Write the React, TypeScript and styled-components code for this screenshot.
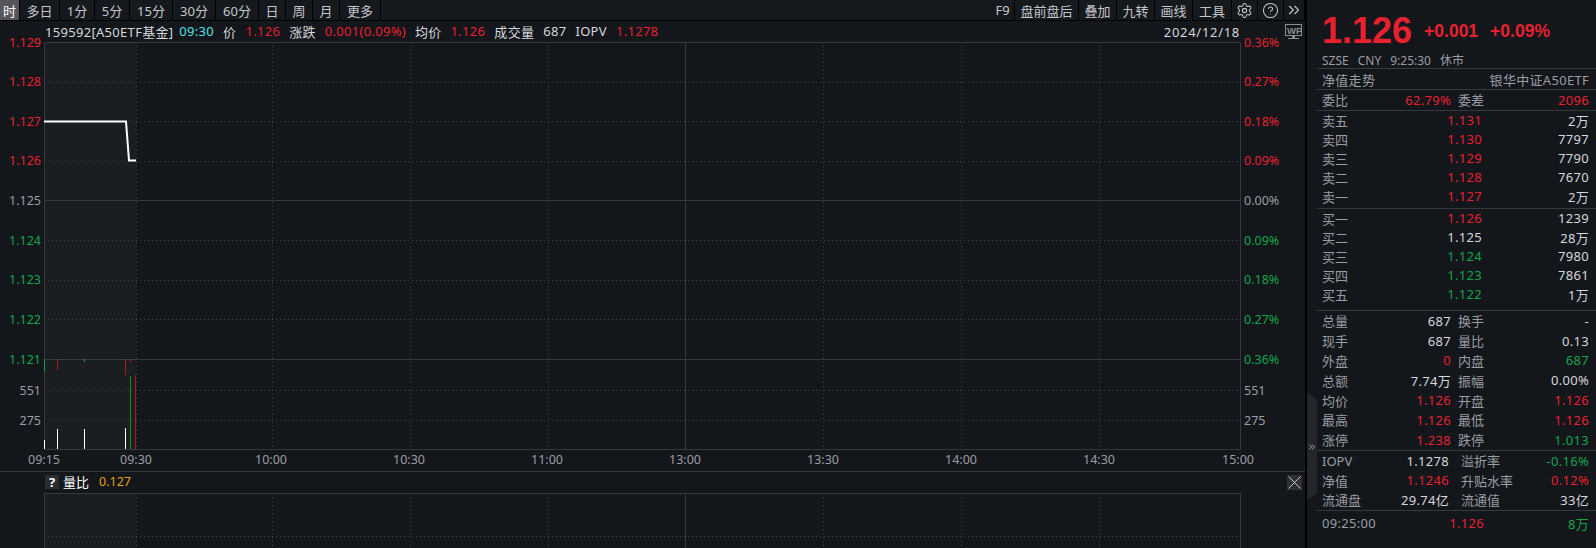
import React from "react"
import styled, { createGlobalStyle } from "styled-components"
import { Settings, CircleHelp, ChevronsRight } from "lucide-react"

const RED = "#e8212f"
const GREEN = "#12a64a"
const GRAY = "#9a9da3"
const TEXT = "#d5d8dc"
const BG = "#13161b"
const LINE = "#37393d"
const DOT = "#43464a"

type Tone = "red" | "green" | "white" | "gray"

const toneColor = (tone?: Tone): string => {
    if (tone === "red") return RED
    if (tone === "green") return GREEN
    if (tone === "gray") return GRAY
    return TEXT
}

const GlobalStyle = createGlobalStyle`
    html, body {
        margin: 0;
        padding: 0;
        background: ${BG};
    }
    body {
        font-family: "Noto Sans", "Noto Sans CJK SC", sans-serif;
        font-size: 13px;
        color: ${TEXT};
    }
`

const periods = [
    { label: "时", width: 20, active: true },
    { label: "多日", width: 40 },
    { label: "1分", width: 35 },
    { label: "5分", width: 35 },
    { label: "15分", width: 43 },
    { label: "30分", width: 43 },
    { label: "60分", width: 43 },
    { label: "日", width: 27 },
    { label: "周", width: 27 },
    { label: "月", width: 27 },
    { label: "更多", width: 41 },
]

const tools = [
    { label: "F9", width: 24 },
    { label: "盘前盘后", width: 64 },
    { label: "叠加", width: 38 },
    { label: "九转", width: 38 },
    { label: "画线", width: 38 },
    { label: "工具", width: 39 },
]

const leftMain: { text: string; tone: Tone }[] = [
    { text: "1.129", tone: "red" },
    { text: "1.128", tone: "red" },
    { text: "1.127", tone: "red" },
    { text: "1.126", tone: "red" },
    { text: "1.125", tone: "gray" },
    { text: "1.124", tone: "green" },
    { text: "1.123", tone: "green" },
    { text: "1.122", tone: "green" },
    { text: "1.121", tone: "green" },
]

const rightMain: { text: string; tone: Tone }[] = [
    { text: "0.36%", tone: "red" },
    { text: "0.27%", tone: "red" },
    { text: "0.18%", tone: "red" },
    { text: "0.09%", tone: "red" },
    { text: "0.00%", tone: "gray" },
    { text: "0.09%", tone: "green" },
    { text: "0.18%", tone: "green" },
    { text: "0.27%", tone: "green" },
    { text: "0.36%", tone: "green" },
]

const times = [
    { label: "09:15", gap: 44 },
    { label: "09:30", gap: 92 },
    { label: "10:00", gap: 135 },
    { label: "10:30", gap: 138 },
    { label: "11:00", gap: 138 },
    { label: "13:00", gap: 138 },
    { label: "13:30", gap: 138 },
    { label: "14:00", gap: 138 },
    { label: "14:30", gap: 138 },
    { label: "15:00", gap: 139 },
]

const gridX = [92, 228, 366, 504, 779, 917, 1055]
const gridY = [39.5, 79, 118.5, 198, 237.5, 277]

const asks: [string, string, Tone, string][] = [
    ["卖五", "1.131", "red", "2万"],
    ["卖四", "1.130", "red", "7797"],
    ["卖三", "1.129", "red", "7790"],
    ["卖二", "1.128", "red", "7670"],
    ["卖一", "1.127", "red", "2万"],
]

const bids: [string, string, Tone, string][] = [
    ["买一", "1.126", "red", "1239"],
    ["买二", "1.125", "white", "28万"],
    ["买三", "1.124", "green", "7980"],
    ["买四", "1.123", "green", "7861"],
    ["买五", "1.122", "green", "1万"],
]

const stats: [string, string, Tone, string, string, Tone][] = [
    ["总量", "687", "white", "换手", "-", "white"],
    ["现手", "687", "white", "量比", "0.13", "white"],
    ["外盘", "0", "red", "内盘", "687", "green"],
    ["总额", "7.74万", "white", "振幅", "0.00%", "white"],
    ["均价", "1.126", "red", "开盘", "1.126", "red"],
    ["最高", "1.126", "red", "最低", "1.126", "red"],
    ["涨停", "1.238", "red", "跌停", "1.013", "green"],
]

const fund: [string, string, Tone, string, string, Tone][] = [
    ["IOPV", "1.1278", "white", "溢折率", "-0.16%", "green"],
    ["净值", "1.1246", "red", "升贴水率", "0.12%", "red"],
    ["流通盘", "29.74亿", "white", "流通值", "33亿", "white"],
]

const MainPlot = () => (
    <svg width="1197" height="408" viewBox="0 0 1197 408" shapeRendering="crispEdges" style={{ display: "block" }}>
        <rect x="0" y="0" width="92" height="408" fill="#1b1e21" />
        {gridY.map(y => (
            <line key={y} x1="0" x2="1197" y1={y + 0.5} y2={y + 0.5} stroke={DOT} strokeDasharray="1 3" />
        ))}
        {[348, 378].map(y => (
            <line key={y} x1="0" x2="1197" y1={y + 0.5} y2={y + 0.5} stroke={DOT} strokeDasharray="1 3" />
        ))}
        {gridX.map(x => (
            <line key={x} x1={x + 0.5} x2={x + 0.5} y1="0" y2="407" stroke={DOT} strokeDasharray="1 3" />
        ))}
        <line x1="0" x2="1197" y1="158.5" y2="158.5" stroke={LINE} />
        <line x1="641.5" x2="641.5" y1="0" y2="407" stroke={LINE} />
        <rect x="0.5" y="0.5" width="1196" height="406.5" fill="none" stroke={LINE} />
        <line x1="0" x2="1197" y1="317.5" y2="317.5" stroke={LINE} />
        <polyline points="0,79.5 82,79.5 85,118.5 92,118.5" fill="none" stroke="#ffffff" strokeWidth="2" shapeRendering="auto" />
        <line x1="0.5" x2="0.5" y1="317" y2="329" stroke={GREEN} />
        <line x1="13.5" x2="13.5" y1="317" y2="328" stroke="#b5141c" />
        <line x1="40.5" x2="40.5" y1="317" y2="320" stroke={GREEN} />
        <line x1="81.5" x2="81.5" y1="317" y2="333" stroke="#b5141c" />
        <line x1="86.5" x2="86.5" y1="317" y2="320" stroke="#b5141c" />
        <line x1="0.5" x2="0.5" y1="398" y2="407" stroke="#ffffff" />
        <line x1="13.5" x2="13.5" y1="387" y2="407" stroke="#ffffff" />
        <line x1="40.5" x2="40.5" y1="387" y2="407" stroke="#ffffff" />
        <line x1="81.5" x2="81.5" y1="386" y2="407" stroke="#ffffff" />
        <line x1="86.5" x2="86.5" y1="334" y2="407" stroke="#0c8f1f" />
        <line x1="91.5" x2="91.5" y1="333" y2="407" stroke="#b5141c" />
    </svg>
)

const LowerPlot = () => (
    <svg width="1197" height="55" viewBox="0 0 1197 55" shapeRendering="crispEdges" style={{ display: "block" }}>
        <rect x="0" y="0" width="92" height="55" fill="#1b1e21" />
        <line x1="0" x2="1197" y1="43.5" y2="43.5" stroke={DOT} strokeDasharray="1 3" />
        {gridX.map(x => (
            <line key={x} x1={x + 0.5} x2={x + 0.5} y1="0" y2="55" stroke={DOT} strokeDasharray="1 3" />
        ))}
        <line x1="641.5" x2="641.5" y1="0" y2="55" stroke={LINE} />
        <line x1="0" x2="1197" y1="0.5" y2="0.5" stroke={LINE} />
        <line x1="0.5" x2="0.5" y1="0" y2="55" stroke={LINE} />
        <line x1="1196.5" x2="1196.5" y1="0" y2="55" stroke={LINE} />
    </svg>
)

const WpIcon = () => (
    <svg width="17" height="16" viewBox="0 0 17 16">
        <rect x="0.5" y="0.5" width="16" height="11" fill="none" stroke="#8a8d90" />
        <text x="2" y="9.5" fontSize="9.5" fontWeight="700" fontFamily="Liberation Sans, sans-serif" fill="#8a8d90">WP</text>
        <rect x="7" y="12" width="3" height="2" fill="#8a8d90" />
        <rect x="3" y="14" width="11" height="1" fill="#8a8d90" />
    </svg>
)

const CloseIcon = () => (
    <svg width="15" height="15" viewBox="0 0 15 15">
        <path d="M1.5 1.5 L13.5 13.5 M13.5 1.5 L1.5 13.5" stroke="#c8c8c8" strokeWidth="1" fill="none" />
    </svg>
)

const App: React.FC = () => (
    <Page>
        <GlobalStyle />
        <LeftPane>
            <Toolbar>
                <ToolGroup>
                    {periods.map(p => (
                        <ToolButton key={p.label} $width={p.width} $active={p.active}>{p.label}</ToolButton>
                    ))}
                </ToolGroup>
                <ToolGroup>
                    {tools.map(t => (
                        <ToolButton key={t.label} $width={t.width}>{t.label}</ToolButton>
                    ))}
                    <ToolButton $width={26}><Settings size={17} strokeWidth={1.5} /></ToolButton>
                    <ToolButton $width={26}><CircleHelp size={17} strokeWidth={1.5} /></ToolButton>
                    <ToolButton $width={21}><ChevronsRight size={18} strokeWidth={1.5} /></ToolButton>
                </ToolGroup>
            </Toolbar>
            <InfoBar>
                <InfoItems>
                    <InfoName>159592[A50ETF基金]</InfoName>
                    <InfoValue $color="#4fe3e3">09:30</InfoValue>
                    <span>价</span>
                    <InfoValue $color={RED}>1.126</InfoValue>
                    <span>涨跌</span>
                    <InfoValue $color={RED}>0.001(0.09%)</InfoValue>
                    <span>均价</span>
                    <InfoValue $color={RED}>1.126</InfoValue>
                    <span>成交量</span>
                    <span>687</span>
                    <span>IOPV</span>
                    <InfoValue $color={RED}>1.1278</InfoValue>
                </InfoItems>
                <DateLabel>2024/12/18</DateLabel>
                <WpSlot><WpIcon /></WpSlot>
            </InfoBar>
            <ChartRow>
                <LeftAxis>
                    <MainTicks>
                        {leftMain.map(t => <Tick key={t.text} $tone={t.tone}>{t.text}</Tick>)}
                    </MainTicks>
                    <VolTicks>
                        <Tick $tone="gray">551</Tick>
                        <Tick $tone="gray">275</Tick>
                    </VolTicks>
                </LeftAxis>
                <MainPlot />
                <RightAxis>
                    <MainTicks>
                        {rightMain.map((t, i) => <Tick key={i} $tone={t.tone}>{t.text}</Tick>)}
                    </MainTicks>
                    <VolTicks>
                        <Tick $tone="gray">551</Tick>
                        <Tick $tone="gray">275</Tick>
                    </VolTicks>
                </RightAxis>
            </ChartRow>
            <TimeAxis>
                {times.map(t => <TimeTick key={t.label} $gap={t.gap}>{t.label}</TimeTick>)}
            </TimeAxis>
            <LegendBar>
                <LegendItems>
                    <HelpBox>?</HelpBox>
                    <LegendName>量比</LegendName>
                    <LegendValue>0.127</LegendValue>
                </LegendItems>
                <CloseBox><CloseIcon /></CloseBox>
            </LegendBar>
            <LowerRow><LowerPlot /></LowerRow>
        </LeftPane>
        <Divider>
            <Handle><ChevronsRight size={12} strokeWidth={2} /></Handle>
        </Divider>
        <SidePanel>
            <Quote>
                <BigPrice>1.126</BigPrice>
                <QuoteChange>+0.001</QuoteChange>
                <QuoteChange>+0.09%</QuoteChange>
            </Quote>
            <MetaRow>
                <span>SZSE</span>
                <span>CNY</span>
                <span>9:25:30</span>
                <span>休市</span>
            </MetaRow>
            <Section>
                <TitleRow>
                    <span>净值走势</span>
                    <span>银华中证A50ETF</span>
                </TitleRow>
            </Section>
            <Section>
                <StatRow>
                    <Label>委比</Label>
                    <Value $tone="red">62.79%</Value>
                    <Label>委差</Label>
                    <Value $tone="red">2096</Value>
                </StatRow>
            </Section>
            <BookSection $bottom={2}>
                {asks.map(([name, price, tone, vol]) => (
                    <BookRow key={name}>
                        <Label>{name}</Label>
                        <Value $tone={tone}>{price}</Value>
                        <Value>{vol}</Value>
                    </BookRow>
                ))}
            </BookSection>
            <BookSection $bottom={6}>
                {bids.map(([name, price, tone, vol]) => (
                    <BookRow key={name}>
                        <Label>{name}</Label>
                        <Value $tone={tone}>{price}</Value>
                        <Value>{vol}</Value>
                    </BookRow>
                ))}
            </BookSection>
            <StatSection>
                {stats.map(([a, av, at, b, bv, bt]) => (
                    <StatRow key={a}>
                        <Label>{a}</Label>
                        <Value $tone={at}>{av}</Value>
                        <Label>{b}</Label>
                        <Value $tone={bt}>{bv}</Value>
                    </StatRow>
                ))}
            </StatSection>
            <StatSection>
                {fund.map(([a, av, at, b, bv, bt]) => (
                    <FundRow key={a}>
                        <Label>{a}</Label>
                        <Value $tone={at}>{av}</Value>
                        <Label>{b}</Label>
                        <Value $tone={bt}>{bv}</Value>
                    </FundRow>
                ))}
            </StatSection>
            <TickRow>
                <Value $tone="gray">09:25:00</Value>
                <Value $tone="red">1.126</Value>
                <Value $tone="green">8万</Value>
            </TickRow>
        </SidePanel>
    </Page>
)

const Page = styled.div`
    display: flex;
    width: 1596px;
    height: 548px;
    overflow: hidden;
    background: ${BG};
`
const LeftPane = styled.div`
    width: 1305px;
    flex: none;
    display: flex;
    flex-direction: column;
`
const Toolbar = styled.div`
    height: 20px;
    display: flex;
    justify-content: space-between;
    border-bottom: 1px solid #000;
    background: #15181d;
`
const ToolGroup = styled.div`
    display: flex;
`
const ToolButton = styled.div<{ $width: number; $active?: boolean }>`
    width: ${p => p.$width}px;
    display: flex;
    align-items: center;
    justify-content: center;
    box-sizing: border-box;
    border-right: 1px solid #000;
    color: ${p => (p.$active ? "#ffffff" : "#c4c7cb")};
    background: ${p => (p.$active ? "#55565c" : "transparent")};
    white-space: nowrap;
`
const InfoBar = styled.div`
    height: 21px;
    display: flex;
    align-items: center;
    padding-left: 45px;
`
const InfoItems = styled.div`
    flex: 1;
    display: flex;
    gap: 9px;
    white-space: nowrap;
    letter-spacing: 0.3px;
`
const InfoName = styled.span`
    margin-right: -3px;
`
const InfoValue = styled.span<{ $color: string }>`
    color: ${p => p.$color};
`
const DateLabel = styled.div`
    margin-right: 3px;
    letter-spacing: 0.7px;
`
const WpSlot = styled.div`
    width: 62px;
    display: flex;
    justify-content: flex-end;
    padding-right: 3px;
    box-sizing: border-box;
`
const ChartRow = styled.div`
    display: flex;
    height: 408px;
    font-size: 12.5px;
`
const LeftAxis = styled.div`
    width: 44px;
    flex: none;
    --tick-justify: flex-end;
    padding-right: 3px;
    box-sizing: border-box;
`
const RightAxis = styled.div`
    flex: 1;
    padding-left: 3px;
    --tick-justify: flex-start;
`
const MainTicks = styled.div`
    height: 317px;
    display: flex;
    flex-direction: column;
    justify-content: space-between;
`
const VolTicks = styled.div`
    display: flex;
    flex-direction: column;
    gap: 30px;
    padding-top: 31px;
`
const Tick = styled.div<{ $tone: Tone }>`
    height: 0;
    display: flex;
    align-items: center;
    justify-content: var(--tick-justify);
    color: ${p => toneColor(p.$tone)};
`
const TimeAxis = styled.div`
    height: 18px;
    padding-bottom: 3px;
    display: flex;
    align-items: center;
    font-size: 12.5px;
    color: ${GRAY};
    border-bottom: 1px solid ${LINE};
`
const TimeTick = styled.div<{ $gap: number }>`
    width: 0;
    margin-left: ${p => p.$gap}px;
    display: flex;
    justify-content: center;
`
const LegendBar = styled.div`
    height: 21px;
    display: flex;
    align-items: center;
    justify-content: space-between;
    padding: 0 3px 0 45px;
`
const LegendItems = styled.div`
    display: flex;
    align-items: center;
    padding-bottom: 2px;
`
const HelpBox = styled.div`
    width: 14px;
    height: 14px;
    line-height: 14px;
    text-align: center;
    background: #2a2c31;
    color: #fff;
    font-weight: 700;
`
const LegendName = styled.span`
    margin-left: 4px;
    color: #fff;
`
const LegendValue = styled.span`
    margin-left: 10px;
    font-size: 12.5px;
    color: #e3a20f;
`
const CloseBox = styled.div`
    width: 15px;
    height: 15px;
    display: flex;
    background: #2e3034;
`
const LowerRow = styled.div`
    padding-left: 44px;
`
const Divider = styled.div`
    width: 12px;
    flex: none;
    box-sizing: border-box;
    border-left: 2px solid #000;
    padding-top: 393px;
`
const Handle = styled.div`
    height: 107px;
    display: flex;
    align-items: center;
    justify-content: center;
    background: #24262b;
    color: #c0c0c0;
    clip-path: polygon(0 0, 100% 6%, 100% 94%, 0 100%);
`
const SidePanel = styled.div`
    flex: 1;
    display: flex;
    flex-direction: column;
`
const Quote = styled.div`
    height: 50px;
    display: flex;
    align-items: center;
    gap: 12px;
    padding: 12px 0 0 5px;
    box-sizing: border-box;
`
const BigPrice = styled.div`
    font-family: "Liberation Sans", sans-serif;
    font-size: 36px;
    font-weight: 700;
    color: ${RED};
`
const QuoteChange = styled.div`
    font-family: "Liberation Sans", sans-serif;
    font-size: 17.5px;
    font-weight: 700;
    color: ${RED};
`
const MetaRow = styled.div`
    height: 18px;
    display: flex;
    align-items: center;
    gap: 9px;
    padding: 2px 5px 0;
    box-sizing: border-box;
    font-size: 12px;
    color: ${GRAY};
`
const Section = styled.div`
    border-top: 1px solid ${LINE};
    padding: 0 7px 0 5px;
`
const TitleRow = styled.div`
    height: 20px;
    display: flex;
    align-items: center;
    justify-content: space-between;
    letter-spacing: 0.3px;
    color: ${GRAY};
`
const BookSection = styled.div<{ $bottom: number }>`
    border-top: 1px solid ${LINE};
    padding: 0 7px ${p => p.$bottom}px 5px;
`
const BookRow = styled.div`
    height: 19px;
    display: grid;
    grid-template-columns: 61px 99px 1fr;
    align-items: center;
`
const StatSection = styled.div`
    border-top: 1px solid ${LINE};
    padding: 0 7px 0 5px;
`
const StatRow = styled.div`
    height: 19.85px;
    display: grid;
    grid-template-columns: 41px 88px 45px 1fr;
    align-items: center;
    & > :nth-child(3) { padding-left: 7px; }
`
const FundRow = styled.div`
    height: 19.7px;
    display: grid;
    grid-template-columns: 50px 77px 82px 1fr;
    align-items: center;
    & > :nth-child(3) { padding-left: 12px; }
`
const Label = styled.span`
    color: ${GRAY};
    white-space: nowrap;
`
const Value = styled.span<{ $tone?: Tone }>`
    color: ${p => toneColor(p.$tone)};
    text-align: right;
    white-space: nowrap;
    letter-spacing: 0.3px;
`
const TickRow = styled.div`
    border-top: 1px solid ${LINE};
    height: 25px;
    padding: 0 7px 0 5px;
    display: grid;
    grid-template-columns: 60px 102px 1fr;
    align-items: center;
    & > :first-child { text-align: left; }
`

export default App
